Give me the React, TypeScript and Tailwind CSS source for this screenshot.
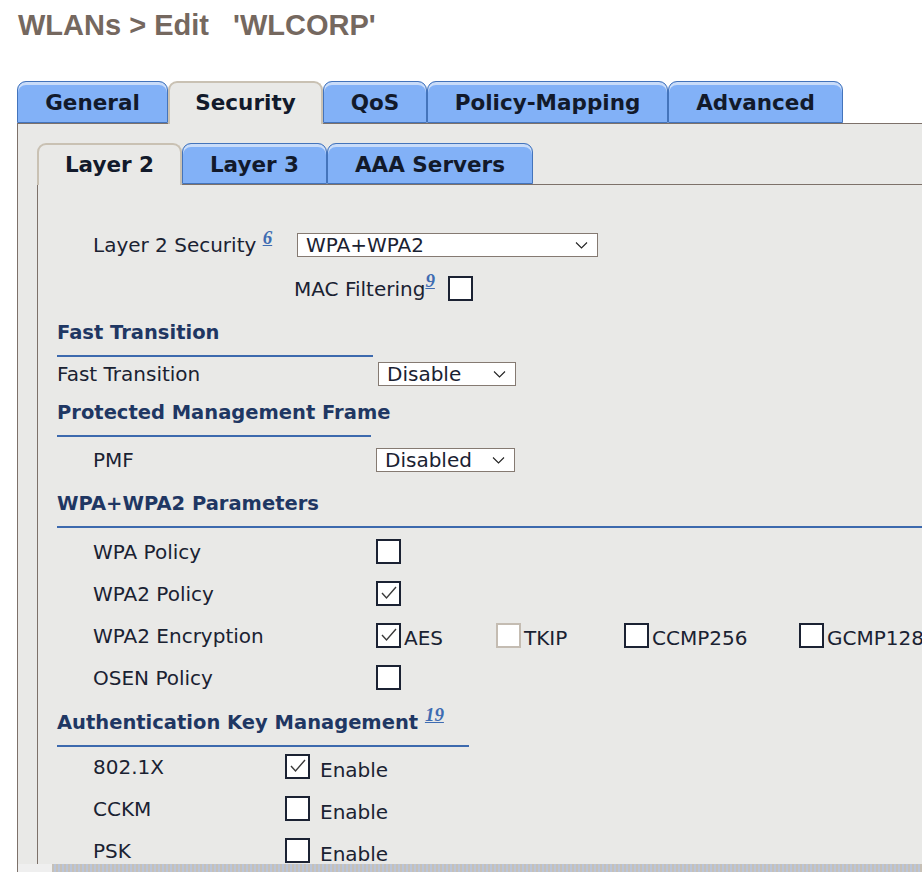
import React from "react";

const blueTab =
  "flex items-center justify-center pt-[3px] bg-[#82b1f7] border border-[#4474bb] rounded-t-[9px] shadow-[inset_0_3px_0_#c9dcf9] text-[#121a2b]";
const activeTab =
  "flex items-center justify-center bg-[#e9e9e7] border-2 border-b-0 border-[#c9c1b3] rounded-t-[9px] text-[#121a2b] relative z-10 -mb-px";

function Check() {
  return (
    <svg width="21" height="21" viewBox="0 0 21 21" className="block">
      <polyline points="4,10 8.5,15 18,4" fill="none" stroke="#3a3a3a" strokeWidth="1.4" />
    </svg>
  );
}

function Box({ checked = false, disabled = false }: { checked?: boolean; disabled?: boolean }) {
  return (
    <div
      className={
        disabled
          ? "w-[25px] h-[25px] shrink-0 bg-white border-2 border-[#c4bcb2]"
          : "w-[25px] h-[25px] shrink-0 bg-white border-2 border-[#1b2233] flex items-center justify-center"
      }
    >
      {checked && <Check />}
    </div>
  );
}

function Select({ value, className }: { value: string; className: string }) {
  return (
    <div
      className={
        "flex items-center justify-between h-[24px] bg-white border border-[#857a72] pl-[8px] pr-[9px] leading-[22px] " +
        className
      }
    >
      <span>{value}</span>
      <svg width="13" height="8" viewBox="0 0 13 8">
        <polyline points="1,1.5 6.5,7 12,1.5" fill="none" stroke="#222" strokeWidth="1.1" />
      </svg>
    </div>
  );
}

function Ref({ n }: { n: string }) {
  return (
    <a className="font-['Liberation_Serif',serif] font-bold italic text-[19px] text-[#3e6cb2] underline relative -top-[8px] leading-none">
      {n}
    </a>
  );
}

function Heading({ children, className }: { children: React.ReactNode; className: string }) {
  return (
    <div
      className={
        "h-[36px] leading-[24px] font-bold text-[19.5px] whitespace-nowrap text-[#1f3763] border-b-2 border-[#3d6aae] " +
        className
      }
    >
      {children}
    </div>
  );
}

function Row({ label, labelW, children }: { label: string; labelW: string; children: React.ReactNode }) {
  return (
    <div className="flex items-center h-[25px] pl-[55px] whitespace-nowrap">
      <div className={"leading-[24px] shrink-0 " + labelW}>{label}</div>
      {children}
    </div>
  );
}

export default function App() {
  return (
    <div className="w-[922px] h-[872px] overflow-hidden bg-white font-['DejaVu_Sans',sans-serif] text-[20px] text-[#1a2232] flex flex-col">
      <h1 className="pl-[18px] pt-[11px] leading-[28px] text-[29px] font-bold text-[#75685f] font-['Liberation_Sans',Arial,sans-serif] whitespace-pre">
        WLANs &gt; Edit   'WLCORP'
      </h1>

      {/* main tabs */}
      <div className="mt-[42px] ml-[17px] flex h-[42px] text-[21.5px] font-bold">
        <div className={blueTab + " w-[151px]"}>General</div>
        <div className={activeTab + " w-[155px]"}>Security</div>
        <div className={blueTab + " w-[104px]"}>QoS</div>
        <div className={blueTab + " w-[241px]"}>Policy-Mapping</div>
        <div className={blueTab + " w-[175px]"}>Advanced</div>
      </div>

      <div className="ml-[17px] flex-1 min-h-0 flex flex-col border-l border-t border-[#7d716a] bg-[#e9e9e7]">
        {/* sub tabs */}
        <div className="mt-[19px] ml-[19px] flex h-[41px] text-[21.5px] font-bold">
          <div className={activeTab + " w-[145px]"}>Layer 2</div>
          <div className={blueTab + " w-[145px]"}>Layer 3</div>
          <div className={blueTab + " w-[206px]"}>AAA Servers</div>
        </div>

        <div className="ml-[19px] flex-1 min-h-0 overflow-hidden border-l border-t border-[#7d716a] flex flex-col">
          <div className="mt-[48px] flex items-center h-[24px] pl-[55px] whitespace-nowrap">
            <div className="w-[204px] shrink-0 leading-[24px]">
              Layer 2 Security <Ref n="6" />
            </div>
            <Select value="WPA+WPA2" className="w-[301px]" />
          </div>

          <div className="mt-[19px] flex items-center h-[25px] pl-[256px]">
            <span className="leading-[24px]">MAC Filtering</span>
            <Ref n="9" />
            <div className="ml-[13px]">
              <Box />
            </div>
          </div>

          <Heading className="mt-[20px] ml-[19px] w-[316px]">Fast Transition</Heading>
          <div className="mt-[5px] flex items-center h-[24px] pl-[19px]">
            <div className="w-[321px] shrink-0 leading-[24px]">Fast Transition</div>
            <Select value="Disable" className="w-[138px]" />
          </div>

          <Heading className="mt-[15px] ml-[19px] w-[314px]">Protected Management Frame</Heading>
          <div className="mt-[11px] flex items-center h-[24px] pl-[55px]">
            <div className="w-[283px] shrink-0 leading-[24px]">PMF</div>
            <Select value="Disabled" className="w-[139px]" />
          </div>

          <Heading className="mt-[20px] ml-[19px]">WPA+WPA2 Parameters</Heading>
          <div className="flex flex-col gap-[17px] mt-[11px]">
            <Row label="WPA Policy" labelW="w-[283px]">
              <Box />
            </Row>
            <Row label="WPA2 Policy" labelW="w-[283px]">
              <Box checked />
            </Row>
            <Row label="WPA2 Encryption" labelW="w-[283px]">
              <div className="flex items-end h-[25px] w-[120px] shrink-0">
                <Box checked />
                <span className="ml-[3px] leading-[20px]">AES</span>
              </div>
              <div className="flex items-end h-[25px] w-[128px] shrink-0">
                <Box disabled />
                <span className="ml-[3px] leading-[20px]">TKIP</span>
              </div>
              <div className="flex items-end h-[25px] w-[175px] shrink-0">
                <Box />
                <span className="ml-[3px] leading-[20px]">CCMP256</span>
              </div>
              <div className="flex items-end h-[25px] shrink-0">
                <Box />
                <span className="ml-[3px] leading-[20px]">GCMP128</span>
              </div>
            </Row>
            <Row label="OSEN Policy" labelW="w-[283px]">
              <Box />
            </Row>
          </div>

          <Heading className="mt-[21px] ml-[19px] w-[412px]">
            Authentication Key Management <Ref n="19" />
          </Heading>
          <div className="flex flex-col gap-[17px] mt-[7px]">
            {[
              ["802.1X", true],
              ["CCKM", false],
              ["PSK", false],
            ].map(([label, on]) => (
              <Row key={label as string} label={label as string} labelW="w-[192px]">
                <Box checked={on as boolean} />
                <span className="ml-[10px] mt-[6px] leading-[24px]">Enable</span>
              </Row>
            ))}
          </div>
        </div>

        {/* bottom scroll strip */}
        <div className="h-[8px] shrink-0 flex">
          <div className="w-[34px] bg-[#efefef]" />
          <div className="flex-1 bg-[repeating-linear-gradient(90deg,#c7c0b6_0px,#c7c0b6_2px,#b9c5da_2px,#b9c5da_4px)]" />
        </div>
      </div>
    </div>
  );
}
